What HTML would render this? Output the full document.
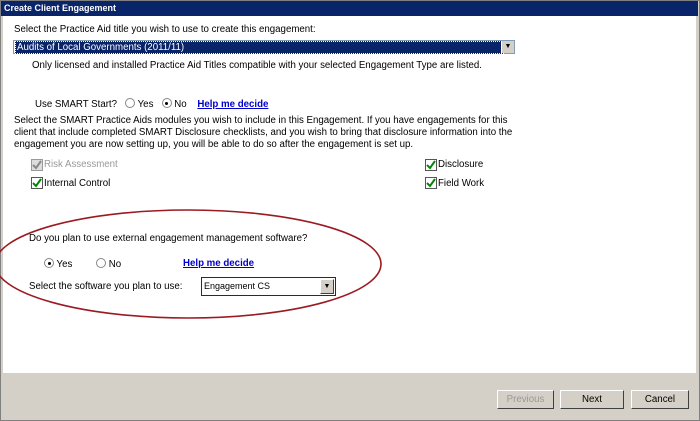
<!DOCTYPE html><html><head><style>
body{margin:0;width:700px;height:421px;overflow:hidden;background:#d4d0c8;font-family:"Liberation Sans",sans-serif;font-size:9.7px;color:#000;position:relative}
.a{position:absolute;white-space:nowrap}
.t{margin-top:1px}
#win{position:absolute;left:0;top:0;width:698px;height:419px;border:1px solid #808080;background:#d4d0c8}
#title{position:absolute;left:1px;top:1px;width:697px;height:15px;background:#0a246a;color:#fff;font-weight:bold;font-size:9px;line-height:15px;padding-left:3px;box-sizing:border-box}
#panel{position:absolute;left:3px;top:16px;width:693px;height:357px;background:#fff}
.rb{display:inline-block;width:8px;height:8px;border:1px solid #888;border-radius:50%;vertical-align:-1px;position:relative;background:#fff}
.rb.on:after{content:"";position:absolute;left:2.5px;top:2.5px;width:3px;height:3px;border-radius:50%;background:#000}
.cb{position:absolute;width:10px;height:10px;border:1px solid #555;background:#fff}
.cb svg{position:absolute;left:0;top:0}
.lnk{color:#00c;font-weight:bold;text-decoration:underline}
.btn{position:absolute;top:390px;height:19px;border:1px solid;border-color:#fff #404040 #404040 #fff;background:#d4d0c8;text-align:center;line-height:17px;box-sizing:border-box}
</style></head><body>
<div id="win"></div>
<div id="title">Create Client Engagement</div>
<div id="panel"></div>
<div class="a t" style="left:14px;top:23px">Select the Practice Aid title you wish to use to create this engagement:</div>
<div class="a" style="left:13px;top:40px;width:502px;height:14px;border:1px solid #7f9db9;background:#fff;box-sizing:border-box"><div style="position:absolute;left:1px;top:0px;width:486px;height:11px;background:#0a246a;color:#fff;line-height:11px;padding-left:1px;border:1px dotted #fff">Audits of Local Governments (2011/11)</div><div style="position:absolute;right:0;top:0;width:12px;height:12px;background:#d4d0c8;border-left:1px solid #fff;font-size:7px;text-align:center;line-height:12px">▼</div></div>
<div class="a t" style="left:32px;top:59px">Only licensed and installed Practice Aid Titles compatible with your selected Engagement Type are listed.</div>
<div class="a t" style="left:35px;top:97px">Use SMART Start? &nbsp;&nbsp;<span class="rb"></span> Yes &nbsp;&nbsp;<span class="rb on"></span> No &nbsp;&nbsp;&nbsp;<span class="lnk">Help me decide</span></div>
<div class="a t" style="left:14px;top:114px;line-height:12px">Select the SMART Practice Aids modules you wish to include in this Engagement. If you have engagements for this<br>client that include completed SMART Disclosure checklists, and you wish to bring that disclosure information into the<br>engagement you are now setting up, you will be able to do so after the engagement is set up.</div>
<div class="cb" style="left:31px;top:159px;background:#ddd;border-color:#999"><svg width="10" height="10"><path d="M1 5 L4 8 L9 1" stroke="#888" stroke-width="2" fill="none"/></svg></div>
<div class="a t" style="left:44px;top:158px;color:#999">Risk Assessment</div>
<div class="cb" style="left:31px;top:177px"><svg width="10" height="10"><path d="M1 5 L4 8 L9 1" stroke="#080" stroke-width="2" fill="none"/></svg></div>
<div class="a t" style="left:44px;top:177px">Internal Control</div>
<div class="cb" style="left:425px;top:159px"><svg width="10" height="10"><path d="M1 5 L4 8 L9 1" stroke="#080" stroke-width="2" fill="none"/></svg></div>
<div class="a t" style="left:438px;top:158px">Disclosure</div>
<div class="cb" style="left:425px;top:177px"><svg width="10" height="10"><path d="M1 5 L4 8 L9 1" stroke="#080" stroke-width="2" fill="none"/></svg></div>
<div class="a t" style="left:438px;top:177px">Field Work</div>
<div class="a t" style="left:29px;top:232px">Do you plan to use external engagement management software?</div>
<div class="a t" style="left:44px;top:257px"><span class="rb on"></span> Yes</div>
<div class="a t" style="left:96px;top:257px"><span class="rb"></span> No</div>
<div class="a t lnk" style="left:183px;top:257px">Help me decide</div>
<div class="a t" style="left:29px;top:280px">Select the software you plan to use:</div>
<div class="a" style="left:201px;top:277px;width:135px;height:19px;border:1px solid #1c2a5a;background:#fff;box-sizing:border-box;font-size:9px;line-height:16px;padding-left:2px">Engagement CS<div style="position:absolute;right:1px;top:1px;width:14px;height:15px;background:#d4d0c8;border:1px solid;border-color:#fff #404040 #404040 #fff;box-sizing:border-box;font-size:7px;text-align:center;line-height:13px">▼</div></div>
<svg class="a" style="left:0;top:0" width="700" height="421"><ellipse cx="188" cy="264" rx="193" ry="54" fill="none" stroke="#9b1b22" stroke-width="1.6"/></svg>
<div class="btn" style="left:497px;width:57px;color:#999">Previous</div>
<div class="btn" style="left:560px;width:64px">Next</div>
<div class="btn" style="left:631px;width:58px">Cancel</div>
</body></html>
